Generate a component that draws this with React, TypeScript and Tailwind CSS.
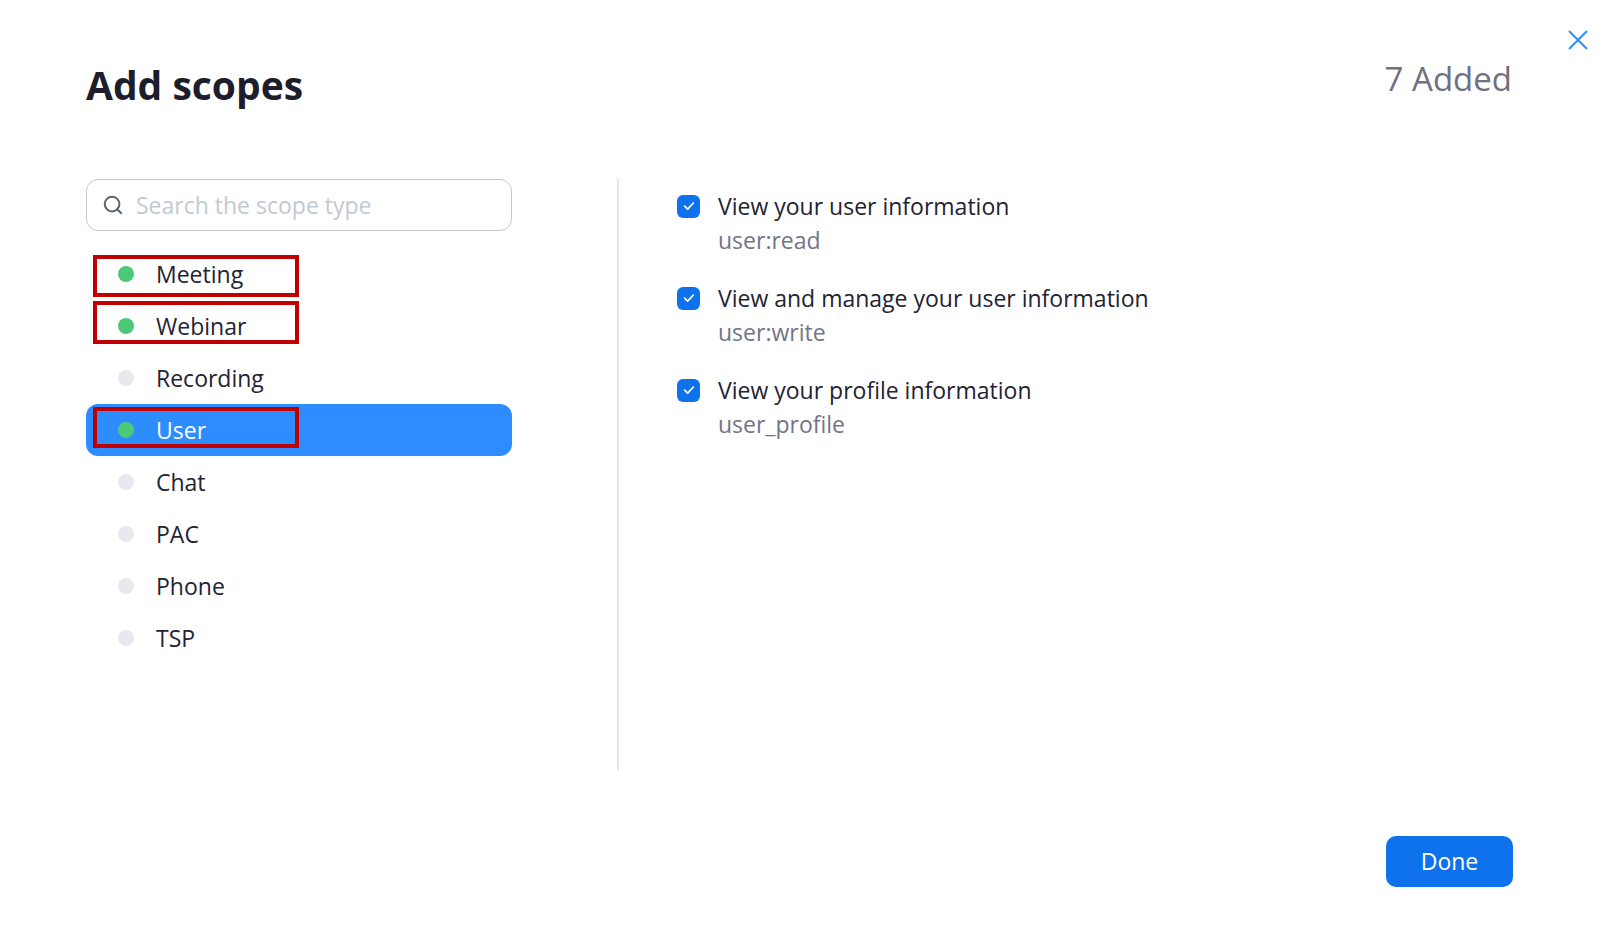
import { Search } from "lucide-react";

const scopes = [
  { name: "Meeting", added: true, mark: "top-[7px] h-[42px]" },
  { name: "Webinar", added: true, mark: "top-[1px] h-[43px]" },
  { name: "Recording", added: false },
  { name: "User", added: true, active: true, mark: "top-[3px] h-[41px]" },
  { name: "Chat", added: false },
  { name: "PAC", added: false },
  { name: "Phone", added: false },
  { name: "TSP", added: false },
];

const perms = [
  { title: "View your user information", code: "user:read" },
  { title: "View and manage your user information", code: "user:write" },
  { title: "View your profile information", code: "user_profile" },
];

function Checked() {
  return (
    <span className="flex h-[23px] w-[23px] shrink-0 items-center justify-center rounded-[6px] bg-[#0e72ed]">
      <svg viewBox="0 0 16 16" className="h-[16px] w-[16px]" fill="none">
        <path d="M3.6 8.2l3 3 5.8-6.2" stroke="white" strokeWidth="1.7" strokeLinecap="round" strokeLinejoin="round" />
      </svg>
    </span>
  );
}

export default function App() {
  return (
    <div className="relative flex h-[949px] w-[1610px] flex-col bg-white font-['Open_Sans',sans-serif] text-[#232333]">
      <button className="absolute left-[1568px] top-[30px] h-[20px] w-[20px]">
        <svg viewBox="0 0 20 20" className="h-[20px] w-[20px]" fill="none">
          <path d="M1 1l18 18M19 1L1 19" stroke="#2d8cff" strokeWidth="2" />
        </svg>
      </button>

      <div className="flex items-start justify-between pl-[86px] pr-[98px] pt-[57px]">
        <h1 className="mt-[1px] text-[39px] font-bold leading-[53px] text-[#1d1d2b]">Add scopes</h1>
        <div className="text-[33px] leading-[44px] text-[#6e7180]">7 Added</div>
      </div>

      <div className="mt-[68px] flex pl-[86px]">
        <div className="w-[426px]">
          <div className="flex h-[52px] items-center gap-[12px] rounded-[12px] border-[1.5px] border-[#c5c7d6] pl-[15px]">
            <Search className="h-[22px] w-[22px] text-[#5e6472]" strokeWidth={2.2} />
            <span className="text-[23px] text-[#c4c8d2]">Search the scope type</span>
          </div>
          <ul className="mt-[17px]">
            {scopes.map((s) => (
              <li
                key={s.name}
                className={`relative flex h-[52px] items-center gap-[22px] rounded-[12px] pl-[32px] ${
                  s.active ? "bg-[#2d8cff] text-white" : ""
                }`}
              >
                <span className={`h-[16px] w-[16px] rounded-full ${s.added ? "bg-[#4cc879]" : "bg-[#e8e9ee]"}`} />
                <span className="text-[23px] leading-none">{s.name}</span>
                {s.mark && (
                  <span className={`absolute left-[7px] w-[206px] border-[4px] border-[#c00000] ${s.mark}`} />
                )}
              </li>
            ))}
          </ul>
        </div>

        <div className="ml-[105px] h-[591px] w-[2px] bg-[#e6e4f4]" />

        <div className="pl-[58px] pt-[9px]">
          {perms.map((p) => (
            <div key={p.code} className="h-[92px]">
              <div className="flex items-center gap-[18px] leading-[36px]">
                <Checked />
                <span className="text-[23px]">{p.title}</span>
              </div>
              <div className="pl-[41px] text-[23px] leading-[32px] text-[#747487]">{p.code}</div>
            </div>
          ))}
        </div>
      </div>

      <div className="mt-[66px] flex justify-end pr-[97px]">
        <button className="h-[51px] w-[127px] rounded-[10px] bg-[#0e72ed] text-[23px] text-white">Done</button>
      </div>
    </div>
  );
}
